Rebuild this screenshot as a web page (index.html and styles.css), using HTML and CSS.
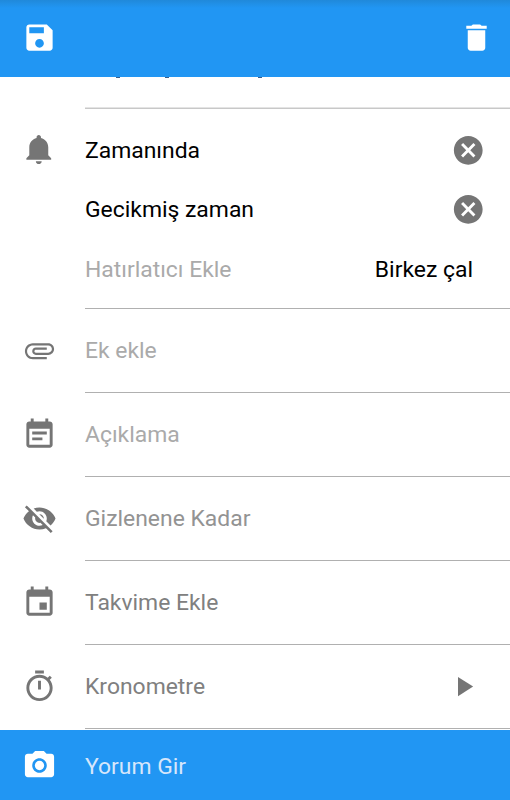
FILE: index.html
```html
<!DOCTYPE html>
<html lang="tr">
<head>
<meta charset="utf-8">
<title>Görev</title>
<link rel="stylesheet" href="styles.css">
</head>
<body>
<div class="screen">
  <header class="toolbar">
    <svg class="icon" viewBox="0 0 24 24"><path d="M17 3H5c-1.11 0-2 .9-2 2v14c0 1.1.89 2 2 2h14c1.1 0 2-.9 2-2V7l-4-4zm-5 16c-1.66 0-3-1.34-3-3s1.34-3 3-3 3 1.34 3 3-1.34 3-3 3zm3-10H5V5h10v4z"/></svg>
    <svg class="icon" viewBox="0 0 24 24"><path d="M6 19c0 1.1.9 2 2 2h8c1.1 0 2-.9 2-2V7H6v12zM19 4h-3.5l-1-1h-5l-1 1H5v2h14V4z"/></svg>
  </header>
  <main class="list">
    <div class="clipped"><i class="tail"></i><i class="tail"></i><i class="tail"></i></div>
    <section class="reminders">
      <div class="line">
        <svg class="icon" viewBox="0 0 24 24"><path d="M11.5 22c1.1 0 2-.9 2-2h-4c0 1.1.9 2 2 2zm6.5-6v-5.5c0-3.07-2.13-5.64-5-6.32V3.5c0-.83-.67-1.5-1.5-1.5S10 2.67 10 3.5v.68c-2.87.68-5 3.25-5 6.32V16l-2 2v1h17v-1l-2-2z"/></svg>
        <span class="label">Zamanında</span>
        <svg class="icon cancel" viewBox="0 0 24 24"><path d="M12 2C6.47 2 2 6.47 2 12s4.47 10 10 10 10-4.47 10-10S17.53 2 12 2zm5 13.59L15.59 17 12 13.41 8.41 17 7 15.59 10.59 12 7 8.41 8.41 7 12 10.59 15.59 7 17 8.41 13.41 12 17 15.59z"/></svg>
      </div>
      <div class="line">
        <span class="label">Gecikmiş zaman</span>
        <svg class="icon cancel" viewBox="0 0 24 24"><path d="M12 2C6.47 2 2 6.47 2 12s4.47 10 10 10 10-4.47 10-10S17.53 2 12 2zm5 13.59L15.59 17 12 13.41 8.41 17 7 15.59 10.59 12 7 8.41 8.41 7 12 10.59 15.59 7 17 8.41 13.41 12 17 15.59z"/></svg>
      </div>
      <div class="line">
        <span class="label hint">Hatırlatıcı Ekle</span>
        <span class="ring">Birkez çal</span>
      </div>
    </section>
    <div class="row">
      <svg class="icon" viewBox="0 0 24 24"><path d="M7.5 18C4.46 18 2 15.54 2 12.5S4.46 7 7.5 7H18c2.21 0 4 1.79 4 4s-1.79 4-4 4H9.5C8.12 15 7 13.88 7 12.5S8.12 10 9.5 10H17v1.5H9.5c-.55 0-1 .45-1 1s.45 1 1 1H18c1.38 0 2.5-1.12 2.5-2.5S19.38 8.5 18 8.5H7.5c-2.21 0-4 1.79-4 4s1.79 4 4 4H17V18H7.5z"/></svg>
      <span class="label hint">Ek ekle</span>
    </div>
    <div class="row">
      <svg class="icon" viewBox="0 0 24 24"><path d="M17 10H7v2h10v-2zm2-7h-1V1h-2v2H8V1H6v2H5c-1.11 0-1.99.9-1.99 2L3 19c0 1.1.89 2 2 2h14c1.1 0 2-.9 2-2V5c0-1.1-.9-2-2-2zm0 16H5V8h14v11zm-5-5H7v2h7v-2z"/></svg>
      <span class="label hint">Açıklama</span>
    </div>
    <div class="row">
      <svg class="icon" viewBox="0 0 24 24"><path d="M12 7c2.76 0 5 2.24 5 5 0 .65-.13 1.26-.36 1.83l2.92 2.92c1.51-1.26 2.7-2.89 3.43-4.75-1.73-4.39-6-7.5-11-7.5-1.4 0-2.74.25-3.98.7l2.16 2.16C10.74 7.13 11.35 7 12 7zM2 4.27l2.28 2.28.46.46C3.08 8.3 1.78 10.02 1 12c1.73 4.39 6 7.5 11 7.5 1.55 0 3.03-.3 4.38-.84l.42.42L19.73 22 21 20.73 3.27 3 2 4.27zM7.53 9.8l1.55 1.55c-.05.21-.08.43-.08.65 0 1.66 1.34 3 3 3 .22 0 .44-.03.65-.08l1.55 1.55c-.67.33-1.41.53-2.2.53-2.76 0-5-2.24-5-5 0-.79.2-1.53.53-2.2zm4.31-.78l3.15 3.15.02-.16c0-1.66-1.34-3-3-3l-.17.01z"/></svg>
      <span class="label soft">Gizlenene Kadar</span>
    </div>
    <div class="row">
      <svg class="icon" viewBox="0 0 24 24"><path d="M17 12h-5v5h5v-5zM16 1v2H8V1H6v2H5c-1.11 0-1.99.9-1.99 2L3 19c0 1.1.89 2 2 2h14c1.1 0 2-.9 2-2V5c0-1.1-.9-2-2-2h-1V1h-2zm3 18H5V8h14v11z"/></svg>
      <span class="label mid">Takvime Ekle</span>
    </div>
    <div class="row">
      <svg class="icon" viewBox="0 0 24 24"><path d="M15 1H9v2h6V1zm-4 13h2V8h-2v6zm8.03-6.61l1.42-1.42c-.43-.51-.9-.99-1.41-1.41l-1.42 1.42C16.07 4.74 14.12 4 12 4c-4.97 0-9 4.03-9 9s4.02 9 9 9 9-4.03 9-9c0-2.12-.74-4.07-1.97-5.61zM12 20c-3.87 0-7-3.13-7-7s3.13-7 7-7 7 3.13 7 7-3.13 7-7 7z"/></svg>
      <span class="label mid">Kronometre</span>
      <svg class="icon play" viewBox="0 0 24 24"><path d="M8 5v14l11-7z"/></svg>
    </div>
  </main>
  <footer class="comment">
    <svg class="icon" viewBox="0 0 24 24"><path d="M9 2L7.17 4H4c-1.1 0-2 .9-2 2v12c0 1.1.9 2 2 2h16c1.1 0 2-.9 2-2V6c0-1.1-.9-2-2-2h-3.17L15 2H9zm3 15c-2.76 0-5-2.24-5-5s2.24-5 5-5 5 2.24 5 5-2.24 5-5 5z"/><circle cx="12" cy="12" r="3.2"/></svg>
    <span class="label">Yorum Gir</span>
  </footer>
</div>
</body>
</html>
```
FILE: styles.css
```css
* { box-sizing: border-box; }
body { margin: 0; background: #fff; }
.screen {
  width: 510px;
  height: 800px;
  display: flex;
  flex-direction: column;
  overflow: hidden;
  font: 22.9px/28px Roboto, sans-serif;
  color: #000;
}
.icon { width: 35px; height: 35px; flex: none; fill: #757575; display: block; }
.toolbar {
  height: 77px;
  flex: none;
  display: flex;
  align-items: center;
  justify-content: space-between;
  padding: 0 16px 2px 22px;
  background: linear-gradient(#2089da, #2196f3 8px);
}
.toolbar .icon, .comment .icon { fill: #fff; }
.list { flex: 1; }
.clipped {
  height: 30px;
  margin-left: 85px;
  padding-left: 31px;
  display: flex;
}
.tail { width: 4px; height: 1px; background: #3a5f8c; margin-right: 45px; }
.tail:nth-child(2) { margin-right: 89px; }
.reminders {
  height: 202px;
  padding-top: 13px;
  background:
    linear-gradient(#e4e4e4 1px, #c8c8c8 1px) 85px 0 / 425px 2px no-repeat,
    linear-gradient(#b0b0b0, #b0b0b0) 85px 100% / 425px 1px no-repeat;
}
.row {
  height: 84px;
  display: flex;
  align-items: center;
  padding: 0 28px 2px 0;
  background: linear-gradient(#b0b0b0, #b0b0b0) 85px 100% / 425px 1px no-repeat;
}
.line { height: 59.5px; display: flex; align-items: center; padding-right: 25px; }
.line > .icon:first-child, .row > .icon:first-child, .comment > .icon { margin: 0 28px 0 22px; }
.line > .label:first-child { margin-left: 85px; }
.label { white-space: nowrap; padding-top: 2px; }
.cancel { width: 34.5px; height: 34.5px; margin-left: auto; }
.ring { margin-left: auto; margin-right: 12px; padding-top: 2px; }
.play { width: 33px; height: 33px; margin-left: auto; margin-right: 2px; }
.hint { color: #aaa; }
.soft { color: #939393; }
.mid { color: #808080; }
.comment {
  height: 70px;
  flex: none;
  display: flex;
  align-items: center;
  background: #2196f3;
  color: #d6e6fb;
}
.comment .label { padding-top: 4px; }
```
